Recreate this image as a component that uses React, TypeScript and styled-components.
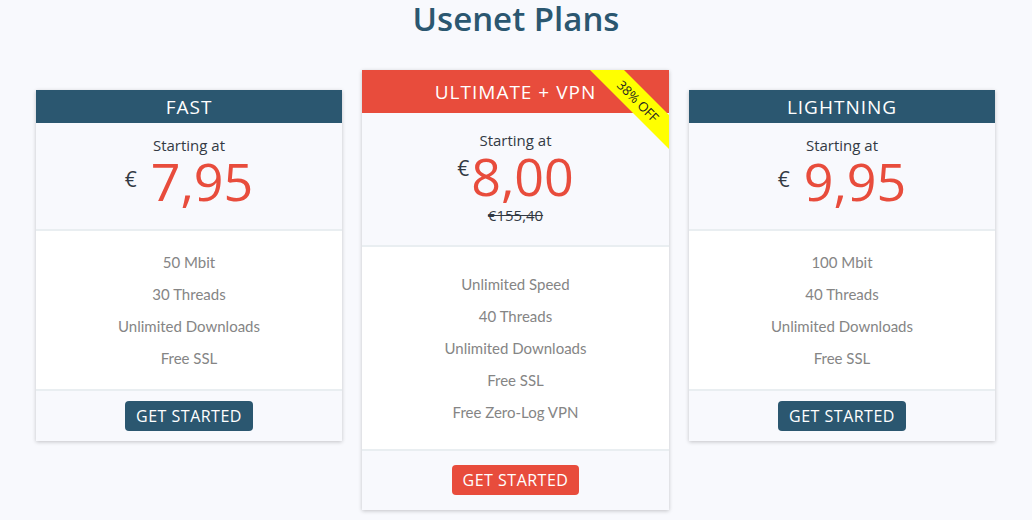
import React from "react";
import styled, { createGlobalStyle } from "styled-components";

const GlobalStyle = createGlobalStyle`
  html, body { margin: 0; padding: 0; background: #f8f9fd; }
  body { font-family: "Open Sans", "Noto Sans", sans-serif; }
  * { box-sizing: border-box; }
`;

const Page = styled.div`
  width: 1032px;
  height: 520px;
  overflow: hidden;
  background: #f8f9fd;
`;

const Title = styled.h1`
  margin: 0;
  height: 70px;
  padding-top: 0;
  line-height: 38px;
  text-align: center;
  font-family: "Open Sans", sans-serif;
  font-weight: 600;
  font-size: 33px;
  color: #2b5770;
`;

const Row = styled.div`
  display: flex;
  align-items: flex-start;
  gap: 20px;
  padding-left: 36px;
`;

const Card = styled.div<{ $featured?: boolean }>`
  position: relative;
  width: ${(p) => (p.$featured ? "307px" : "306px")};
  margin-top: ${(p) => (p.$featured ? "0" : "20px")};
  background: #fff;
  box-shadow: 0 1px 4px rgba(0, 0, 0, 0.22);
  overflow: hidden;
`;

const Header = styled.div<{ $featured?: boolean }>`
  height: ${(p) => (p.$featured ? "43px" : "33px")};
  display: flex;
  align-items: center;
  justify-content: center;
  background: ${(p) => (p.$featured ? "#e84c3c" : "#2b5770")};
  color: #fff;
  font-family: "Open Sans", sans-serif;
  font-size: 19px;
  letter-spacing: 1px;
`;

const PriceBox = styled.div<{ $featured?: boolean }>`
  background: #f8f9fd;
  border-bottom: 2px solid #e9eef1;
  height: ${(p) => (p.$featured ? "134px" : "108px")};
  display: flex;
  flex-direction: column;
  align-items: center;
  padding-top: ${(p) => (p.$featured ? "17px" : "12px")};
`;

const Starting = styled.div`
  font-family: "Open Sans", sans-serif;
  font-size: 15px;
  line-height: 20px;
  color: #333a44;
`;

const PriceLine = styled.div`
  display: flex;
  align-items: flex-start;
  color: #e84c3c;
  font-family: "Open Sans", sans-serif;
  height: 52px;
`;

const Euro = styled.span<{ $tight?: boolean }>`
  font-size: 21px;
  line-height: 24px;
  color: #333a44;
  margin-top: ${(p) => (p.$tight ? "6px" : "12px")};
  margin-right: ${(p) => (p.$tight ? "2px" : "14px")};
`;

const Amount = styled.span`
  font-size: 52px;
  line-height: 52px;
`;

const OldPrice = styled.div`
  margin-top: 3px;
  font-family: "Open Sans", sans-serif;
  font-size: 15px;
  color: #333a44;
  text-decoration: line-through;
`;

const Features = styled.ul<{ $featured?: boolean }>`
  list-style: none;
  margin: 0;
  padding: ${(p) => (p.$featured ? "21px 0" : "15px 0")};
  background: #fff;
  border-bottom: 2px solid #e9eef1;
`;

const Feature = styled.li`
  height: 32px;
  line-height: 32px;
  text-align: center;
  font-family: "Lato", sans-serif;
  font-size: 15px;
  color: #858585;
`;

const Footer = styled.div<{ $featured?: boolean }>`
  background: #f8f9fd;
  display: flex;
  justify-content: center;
  padding: ${(p) => (p.$featured ? "14px 0 15px" : "10px 0 10px")};
`;

const Button = styled.button<{ $featured?: boolean }>`
  border: none;
  border-radius: 4px;
  height: 30px;
  padding: 0 11px;
  background: ${(p) => (p.$featured ? "#e84c3c" : "#2b5770")};
  color: #fff;
  font-family: "Open Sans", sans-serif;
  font-size: 16px;
  letter-spacing: 0.5px;
  cursor: pointer;
`;

const Ribbon = styled.div`
  position: absolute;
  top: 19px;
  right: -29px;
  width: 120px;
  height: 24px;
  transform: rotate(45deg);
  background: #ffff00;
  color: #222;
  font-family: "Open Sans", sans-serif;
  font-size: 13px;
  display: flex;
  align-items: center;
  justify-content: center;
`;

type Plan = {
  name: string;
  price: string;
  old?: string;
  features: string[];
  featured?: boolean;
};

const plans: Plan[] = [
  { name: "FAST", price: "7,95", features: ["50 Mbit", "30 Threads", "Unlimited Downloads", "Free SSL"] },
  {
    name: "ULTIMATE + VPN",
    price: "8,00",
    old: "€155,40",
    featured: true,
    features: ["Unlimited Speed", "40 Threads", "Unlimited Downloads", "Free SSL", "Free Zero-Log VPN"],
  },
  { name: "LIGHTNING", price: "9,95", features: ["100 Mbit", "40 Threads", "Unlimited Downloads", "Free SSL"] },
];

export default function App() {
  return (
    <Page>
      <GlobalStyle />
      <Title>Usenet Plans</Title>
      <Row>
        {plans.map((p) => (
          <Card key={p.name} $featured={p.featured}>
            {p.featured && <Ribbon>38% OFF</Ribbon>}
            <Header $featured={p.featured}>{p.name}</Header>
            <PriceBox $featured={p.featured}>
              <Starting>Starting at</Starting>
              <PriceLine>
                <Euro $tight={p.featured}>€</Euro>
                <Amount>{p.price}</Amount>
              </PriceLine>
              {p.old && <OldPrice>{p.old}</OldPrice>}
            </PriceBox>
            <Features $featured={p.featured}>
              {p.features.map((f) => (
                <Feature key={f}>{f}</Feature>
              ))}
            </Features>
            <Footer $featured={p.featured}>
              <Button $featured={p.featured}>GET STARTED</Button>
            </Footer>
          </Card>
        ))}
      </Row>
    </Page>
  );
}
